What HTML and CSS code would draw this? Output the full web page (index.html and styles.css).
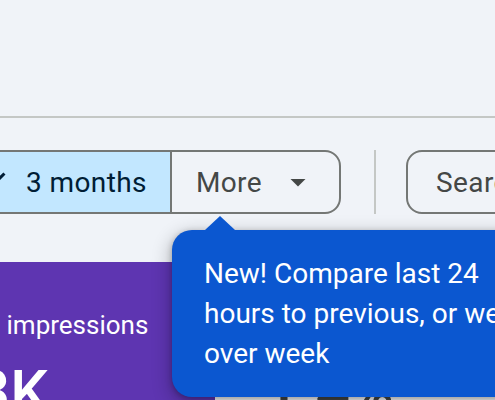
FILE: index.html
```html
<!DOCTYPE html>
<html lang="en">
<head>
<meta charset="utf-8">
<title>Performance</title>
<link rel="stylesheet" href="styles.css">
</head>
<body>
<div class="page">
  <div class="topbar"></div>
  <div class="toolbar">
    <div class="segmented">
      <button class="seg seg-selected">
        <svg class="icon" viewBox="0 0 24 24" width="36" height="36" aria-hidden="true"><path d="M9 16.17L4.83 12l-1.42 1.41L9 19 21 7l-1.41-1.41z" fill="#001d35"/></svg>
        <span>3 months</span>
      </button>
      <button class="seg seg-more">
        <span>More</span>
        <svg class="icon" viewBox="0 0 24 24" width="36" height="36" aria-hidden="true"><path d="M7 10l5 5 5-5z" fill="#444746"/></svg>
      </button>
    </div>
    <div class="sep"></div>
    <button class="chip">Search type: Web</button>
  </div>
  <div class="cards">
    <div class="card card-purple">
      <div class="card-label">Total impressions</div>
      <div class="card-value">13K</div>
    </div>
    <div class="card card-plain">
      <div class="card-label">Average CTR</div>
      <div class="card-value">1.4%</div>
    </div>
  </div>
  <div class="tooltip">New! Compare last 24 hours to previous, or week over week</div>
</div>
</body>
</html>
```
FILE: styles.css
```css
html, body {
  margin: 0;
  padding: 0;
  overflow: hidden;
  width: 495px;
  height: 400px;
}
body {
  background: #f0f3f8;
  font-family: Roboto, "Liberation Sans", sans-serif;
}
.page {
  position: relative;
  width: 495px;
  height: 400px;
  overflow: hidden;
}
.topbar {
  height: 116px;
  border-bottom: 2px solid #c4c7c5;
}
.toolbar {
  display: flex;
  align-items: center;
  margin-top: 32px;
  margin-left: -52px;
  white-space: nowrap;
}
.segmented {
  display: flex;
  flex-shrink: 0;
  height: 64px;
  box-sizing: border-box;
  border: 2px solid #747775;
  border-radius: 16px;
  overflow: hidden;
}
.seg {
  display: flex;
  align-items: center;
  border: 0;
  margin: 0;
  background: transparent;
  font-family: inherit;
  font-size: 28px;
  font-weight: 450;
  letter-spacing: 0.4px;
  height: 100%;
}
.seg-selected {
  background: #c2e7ff;
  color: #001d35;
  padding: 0 23px 0 24px;
  gap: 16px;
}
.seg-more {
  color: #444746;
  border-left: 2px solid #747775;
  padding: 0 23px 0 24px;
  gap: 18px;
}
.icon {
  display: block;
  flex-shrink: 0;
}
.sep {
  flex-shrink: 0;
  width: 2px;
  height: 64px;
  background: #c4c7c5;
  margin: 0 30px 0 33px;
}
.chip {
  flex-shrink: 0;
  height: 64px;
  box-sizing: border-box;
  border: 2px solid #747775;
  border-radius: 16px;
  background: transparent;
  padding: 0 28px;
  font-family: inherit;
  font-size: 28px;
  font-weight: 450;
  letter-spacing: 0.4px;
  color: #444746;
  margin: 0;
}
.cards {
  display: flex;
  margin-top: 48px;
  margin-left: -90px;
}
.card {
  flex-shrink: 0;
  height: 220px;
  box-sizing: border-box;
  padding: 45px 0 0 32px;
  white-space: nowrap;
}
.card-purple {
  width: 305px;
  background: #5e35b1;
  color: #fff;
}
.card-plain {
  width: 320px;
  background: #ffffff;
  color: #444746;
  padding-left: 50px;
}
.card-label {
  font-size: 26px;
  line-height: 36px;
}
.card-value {
  margin-top: 13px;
  font-size: 60px;
  line-height: 72px;
  font-weight: 500;
}
.tooltip {
  position: absolute;
  left: 172px;
  top: 230px;
  width: 340px;
  padding: 24px 32px 23px;
  background: #0b57d0;
  color: #fff;
  border-radius: 20px;
  font-size: 28px;
  line-height: 40px;
  box-shadow: 0 2px 6px rgba(0, 0, 0, 0.3), 0 6px 16px 6px rgba(0, 0, 0, 0.15);
}
.tooltip::before {
  content: "";
  position: absolute;
  left: 33px;
  top: -14px;
  border-left: 15px solid transparent;
  border-right: 15px solid transparent;
  border-bottom: 14px solid #0b57d0;
}
```
